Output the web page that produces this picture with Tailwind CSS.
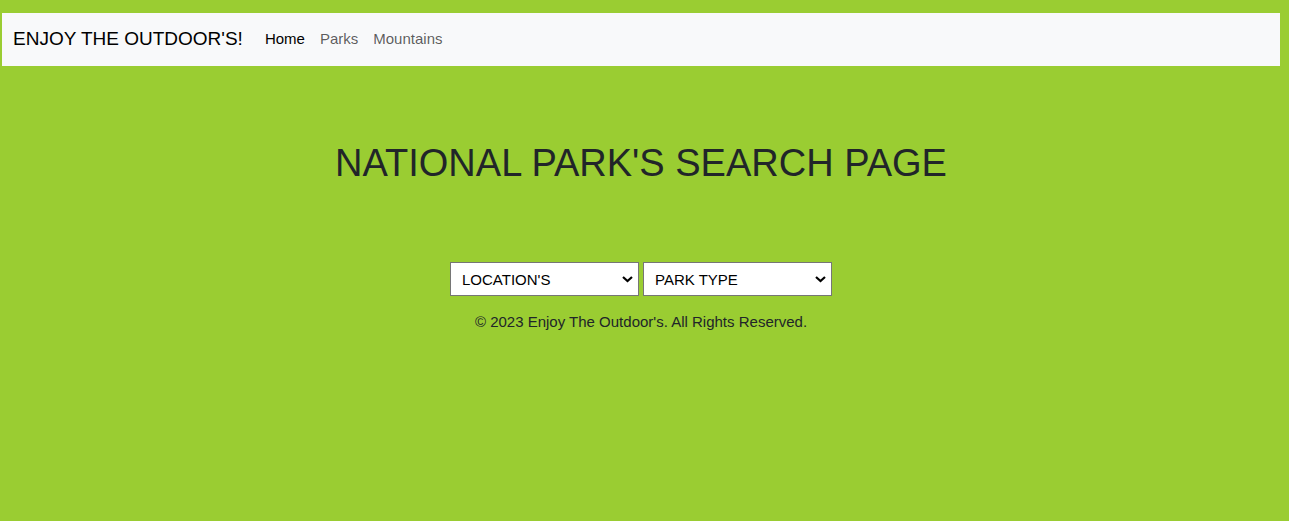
<!DOCTYPE html>
<html lang="en">
<head>
<meta charset="utf-8">
<meta name="viewport" content="width=device-width, initial-scale=1">
<title>Enjoy The Outdoor's</title>
<script src="https://cdn.jsdelivr.net/npm/@tailwindcss/browser@4"></script>
</head>
<body class="min-h-screen bg-[#9acd32] pt-[13px] pr-[9px] pl-[2px] font-['Liberation_Sans',Arial,sans-serif] text-[15px] leading-6 text-[#212529]">
<header>
  <nav class="flex min-h-[53px] flex-wrap items-center bg-[#f8f9fa] px-[11px] pb-[2px]" aria-label="Main">
    <a href="#" class="mr-[22px] text-[19px] leading-7 text-black">ENJOY THE OUTDOOR'S!</a>
    <ul class="flex gap-[15px]">
      <li><a href="#" class="text-black" aria-current="page">Home</a></li>
      <li><a href="#" class="text-black/65">Parks</a></li>
      <li><a href="#" class="text-black/65">Mountains</a></li>
    </ul>
  </nav>
</header>
<main class="text-center">
  <h1 class="pt-[74px] text-[38px] leading-[46px]">NATIONAL PARK'S SEARCH PAGE</h1>
  <form class="mt-[76px] flex flex-wrap justify-center gap-1">
    <div class="relative">
      <select aria-label="Location" class="h-[34px] w-[189px] appearance-none border border-[#767676] bg-white px-[11px] pt-[2px] text-black">
        <option>LOCATION'S</option>
      </select>
      <svg class="pointer-events-none absolute top-[14px] right-[6px] h-[7px] w-[11px]" viewBox="0 0 11 7" fill="none" stroke="#000" stroke-width="2.2" aria-hidden="true"><path d="M1 1L5.500 5L10 1"/></svg>
    </div>
    <div class="relative">
      <select aria-label="Park type" class="h-[34px] w-[189px] appearance-none border border-[#767676] bg-white px-[11px] pt-[2px] text-black">
        <option>PARK TYPE</option>
      </select>
      <svg class="pointer-events-none absolute top-[14px] right-[6px] h-[7px] w-[11px]" viewBox="0 0 11 7" fill="none" stroke="#000" stroke-width="2.2" aria-hidden="true"><path d="M1 1L5.500 5L10 1"/></svg>
    </div>
  </form>
</main>
<footer class="pt-[14px] text-center">
  <p>© 2023 Enjoy The Outdoor's. All Rights Reserved.</p>
</footer>
</body>
</html>
